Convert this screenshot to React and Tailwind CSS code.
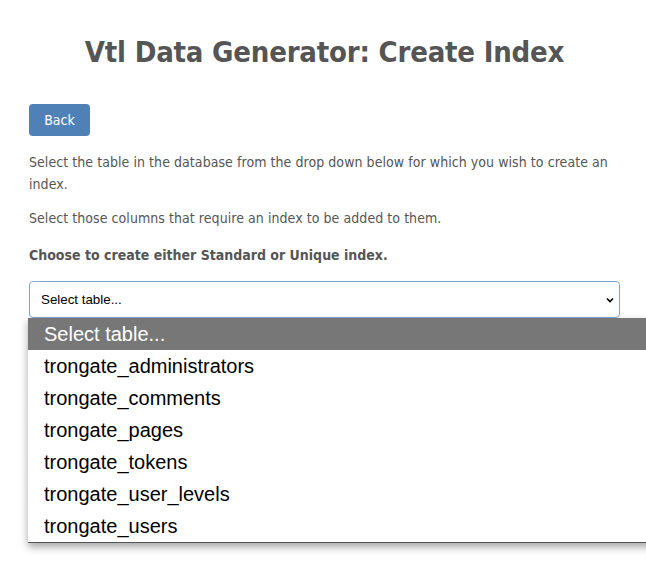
export default function App() {
  const options = [
    "trongate_administrators",
    "trongate_comments",
    "trongate_pages",
    "trongate_tokens",
    "trongate_user_levels",
    "trongate_users",
  ];
  return (
    <div className="relative min-h-[575px] bg-white overflow-hidden text-[#555]" style={{ fontFamily: '"DejaVu Sans Condensed", "DejaVu Sans", sans-serif' }}>
      <div className="pl-[29px] pr-[26px] pt-[33px]">
        <h1 className="text-center text-[29px] font-bold leading-[38px] tracking-[-0.2px] text-[#555]">Vtl Data Generator: Create Index</h1>
        <button className="mt-[33px] h-[32px] w-[61px] rounded-[4px] bg-[#4f81b7] text-[14px] text-white">Back</button>
        <p className="mt-[15px] text-[14px] leading-[22px] tracking-[0.06px]">Select the table in the database from the drop down below for which you wish to create an index.</p>
        <p className="mt-[12px] text-[14px] leading-[22px] tracking-[0.06px]">Select those columns that require an index to be added to them.</p>
        <p className="mt-[15px] text-[14px] leading-[22px] font-bold">Choose to create either Standard or Unique index.</p>
        <div className="relative mt-[15px]">
          <div className="flex h-[37px] items-center justify-between rounded-[4px] border border-[#7fa6d2] bg-white pl-[11px] pr-[4px] text-[13.33px] text-black" style={{ fontFamily: '"Liberation Sans", Arial, sans-serif' }}>
            <span>Select table...</span>
            <svg width="10" height="10" viewBox="0 0 10 10"><path d="M2 3.5 L5 6.5 L8 3.5" fill="none" stroke="#000" strokeWidth="1.6" /></svg>
          </div>
          <div className="absolute left-[-1px] top-[37px] w-[660px] border-b border-[#555] bg-white shadow-[0_4px_8px_rgba(0,0,0,0.35)]" style={{ fontFamily: '"Liberation Sans", Arial, sans-serif' }}>
            <div className="h-[32px] bg-[#777] pl-[16px] text-[20px] leading-[32px] text-white">Select table...</div>
            {options.map((o) => (
              <div key={o} className="h-[32px] pl-[16px] text-[20px] leading-[32px] text-black">{o}</div>
            ))}
          </div>
        </div>
      </div>
    </div>
  );
}
